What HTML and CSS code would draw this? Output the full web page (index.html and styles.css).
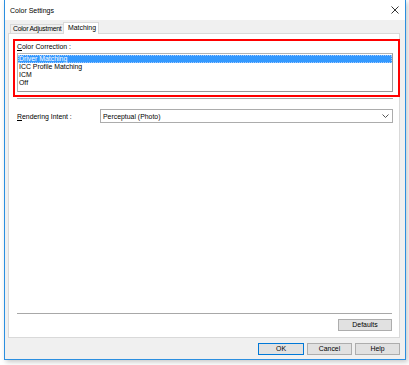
FILE: index.html
```html
<!DOCTYPE html>
<html>
<head>
<meta charset="utf-8">
<link rel="stylesheet" href="styles.css">
</head>
<body>
<div class="window">
  <div class="titlebar">
    <span class="title">Color Settings</span>
    <svg class="close" width="8" height="8" viewBox="0 0 8 8"><path d="M0.5 0.5 L7.5 7.5 M7.5 0.5 L0.5 7.5" stroke="#333" stroke-width="1" fill="none"/></svg>
  </div>
  <div class="client">
    <div class="tabs">
      <div class="tab">Color Adjustment</div>
      <div class="tab active">Matching</div>
    </div>
    <div class="panel">
      <div class="group">
        <div class="label"><u>C</u>olor Correction :</div>
        <div class="listbox">
          <div class="item selected">Driver Matching</div>
          <div class="item">ICC Profile Matching</div>
          <div class="item">ICM</div>
          <div class="item">Off</div>
        </div>
      </div>
      <div class="sep"></div>
      <div class="row">
        <div class="rlabel"><u>R</u>endering Intent :</div>
        <div class="combo">
          <span>Perceptual (Photo)</span>
          <svg class="chev" width="7" height="4" viewBox="0 0 7 4"><path d="M0.5 0.5 L3.5 3.5 L6.5 0.5" stroke="#555" stroke-width="1" fill="none"/></svg>
        </div>
      </div>
      <div class="spacer"></div>
      <div class="sep bottom"></div>
      <div class="defrow"><div class="btn defaults">Defaults</div></div>
    </div>
    <div class="buttons">
      <div class="btn ok">OK</div>
      <div class="btn">Cancel</div>
      <div class="btn">Help</div>
    </div>
  </div>
</div>
</body>
</html>
```

FILE: styles.css
```css
html, body {
  margin: 0;
  padding: 0;
  background: #ffffff;
  width: 409px;
  height: 365px;
  overflow: hidden;
  font-family: "Liberation Sans", Arial, sans-serif;
  font-size: 6.9px;
  color: #000;
}
u { text-decoration: underline; text-underline-offset: 1px; }
.window {
  margin-left: 4px;
  width: 400px;
  height: 359px;
  border: 1px solid #2b8fe0;
  border-top: none;
  background: #f0f0f0;
  box-shadow: 2px 2px 5px rgba(0,0,0,0.22);
  display: flex;
  flex-direction: column;
}
.titlebar {
  height: 20px;
  background: #ffffff;
  display: flex;
  align-items: center;
  padding: 0 6px 0 5px;
  font-size: 7px;
  justify-content: space-between;
}
.client {
  flex: 1;
  display: flex;
  flex-direction: column;
  padding: 2px 0 0 3px;
}
.tabs {
  display: flex;
  align-items: flex-end;
  height: 11px;
  padding-left: 2px;
  position: relative;
  z-index: 1;
}
.tab {
  box-sizing: border-box;
  height: 9px;
  line-height: 8px;
  padding: 0 0 0 2px;
  border: 1px solid #d9d9d9;
  border-bottom: none;
  background: #f0f0f0;
  width: 54px;
  white-space: nowrap;
  letter-spacing: -0.25px;
}
.tab.active {
  height: 12px;
  line-height: 10px;
  background: #ffffff;
  width: 36px;
  margin-left: -1px;
  margin-bottom: -1px;
  padding-left: 4px;
  letter-spacing: 0;
}
.panel {
  width: 390px;
  height: 303px;
  background: #ffffff;
  border: 1px solid #d9d9d9;
  display: flex;
  flex-direction: column;
}
.group {
  margin: 5px 0 0 4px;
  width: 381px;
  height: 54px;
  border: 2px solid #ff0000;
  padding: 0 0 0 2px;
  display: flex;
  flex-direction: column;
}
.label {
  height: 11px;
  line-height: 10px;
  margin-top: 1px;
}
.listbox {
  width: 374px;
  height: 35px;
  border: 1px solid #b4b4b4;
  border-right-color: #9a9a9a;
  border-bottom-color: #9a9a9a;
  padding: 1px 0;
  background: #fff;
}
.item {
  height: 8px;
  line-height: 8px;
  padding-left: 1px;
}
.item.selected {
  background: #3399ff;
  color: #ffffff;
  outline: 1px dotted #a0c8ff;
  outline-offset: -1px;
}
.sep {
  margin: 1px 0 0 8px;
  width: 376px;
  height: 1px;
  background: #a8a8a8;
}
.row {
  display: flex;
  align-items: center;
  margin-top: 10px;
  padding-left: 8px;
  height: 14px;
}
.rlabel { width: 83px; }
.combo {
  width: 286px;
  height: 12px;
  border: 1px solid #acacac;
  display: flex;
  align-items: center;
  justify-content: space-between;
  padding: 0 3px 0 2px;
}
.spacer { flex: 1; }
.sep.bottom {
  margin: 0 0 0 8px;
  width: 375px;
}
.defrow {
  display: flex;
  justify-content: flex-end;
  padding: 5px 7px 6px 0;
}
.btn {
  width: 43px;
  height: 10px;
  line-height: 10px;
  background: #e1e1e1;
  border: 1px solid #adadad;
  text-align: center;
}
.btn.defaults { width: 52px; }
.buttons {
  display: flex;
  justify-content: flex-end;
  gap: 3px;
  padding: 5px 5px 0 0;
}
.btn.ok { border-color: #0078d7; width: 44px; }
```
